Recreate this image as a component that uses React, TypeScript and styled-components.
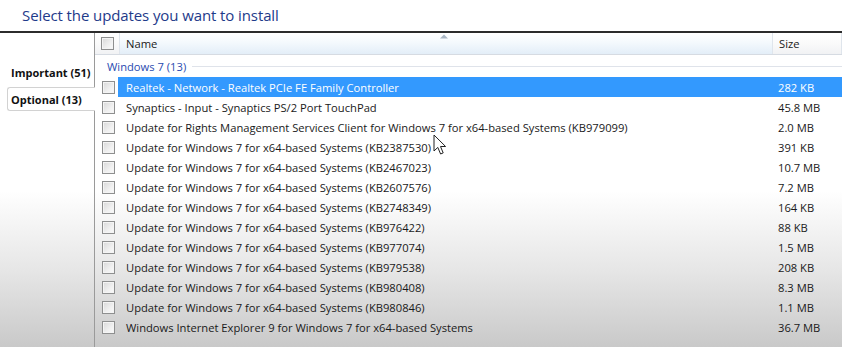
import React from "react";
import styled, { createGlobalStyle } from "styled-components";

const Global = createGlobalStyle`
  html, body { margin: 0; padding: 0; }
  body {
    width: 842px; height: 347px; overflow: hidden;
    font-family: "Open Sans", "Noto Sans", sans-serif;
    background: linear-gradient(180deg, #ffffff 0%, #ffffff 55%, #e6e6e6 78%, #c9c9c9 100%);
  }
`;

const Page = styled.div`
  width: 842px; height: 347px; position: relative;
  display: flex; flex-direction: column;
`;

const Title = styled.div`
  height: 31px; box-sizing: border-box;
  padding: 5px 0 0 22px;
  font-size: 15px; color: #1e3a8a; letter-spacing: -0.1px;
`;

const Body = styled.div`
  flex: 1; display: flex;
  border-top: 2px solid #2c2c2c;
`;

const Side = styled.div`
  width: 94px; flex: none; box-sizing: border-box;
  padding: 27px 0 0 7px;
  display: flex; flex-direction: column; gap: 3px;
`;

const Tab = styled.div<{ $active?: boolean }>`
  height: 24px; box-sizing: border-box;
  padding-left: 3px;
  display: flex; align-items: center;
  white-space: nowrap;
  font-weight: 700; font-size: 11px; color: #111;
  margin-right: ${p => (p.$active ? "-1px" : "0")};
  background: ${p => (p.$active ? "#fff" : "transparent")};
  border: 1px solid ${p => (p.$active ? "#d2d2d2" : "transparent")};
  border-right: none;
  border-radius: 3px 0 0 3px;
  position: relative; z-index: 1;
`;

const List = styled.div`
  flex: 1; display: flex; flex-direction: column;
  border-left: 1px solid #9a9a9a;
`;

const Header = styled.div`
  height: 21px; display: flex;
  border-bottom: 1px solid #d6dbe2;
`;

const HeadCell = styled.div<{ $w?: number; $blue?: boolean }>`
  ${p => (p.$w ? `width: ${p.$w}px; flex: none;` : "flex: 1;")}
  box-sizing: border-box; display: flex; align-items: center;
  padding-left: 6px; position: relative;
  font-size: 11.2px; color: #1a1a1a;
  background: ${p => (p.$blue
    ? "linear-gradient(180deg, #ffffff 0%, #f4f9fd 45%, #e3eef8 100%)"
    : "linear-gradient(180deg, #ffffff 0%, #fafafa 50%, #f1f2f4 100%)")};
  border-right: 1px solid #dfe5ec;
`;

const SortArrow = styled.svg`
  position: absolute; left: 320px; top: 1px;
`;

const GroupRow = styled.div`
  height: 22px; display: flex; align-items: center;
  padding-left: 12px; gap: 6px;
  font-size: 11.2px; color: #2a4bb0;
`;

const GroupLine = styled.div`
  flex: 1; height: 1px; background: #dfe3ea;
`;

const Row = styled.div<{ $sel?: boolean }>`
  height: 20px; display: flex; align-items: center;
  font-size: 11.2px;
  color: ${p => (p.$sel ? "#fff" : "#1a1a1a")};
`;

const CheckCell = styled.div`
  width: 20px; flex: none; display: flex; justify-content: flex-end;
`;

const Check = styled.div`
  width: 11px; height: 11px;
  border: 1px solid #8e8f8f;
  background: linear-gradient(135deg, #d8d8d8 0%, #f0f0f0 60%, #fbfbfb 100%);
  box-shadow: inset 0 0 0 1px #f4f4f4;
`;

const RowBody = styled.div<{ $sel?: boolean }>`
  flex: 1; height: 20px; display: flex; align-items: center;
  margin-left: 3px;
  background: ${p => (p.$sel ? "#3399fe" : "transparent")};
`;

const NameText = styled.div`
  width: 652px; flex: none; padding-left: 8px; box-sizing: border-box;
  white-space: nowrap; overflow: hidden;
`;

const SizeText = styled.div`
  flex: 1; padding-left: 8px;
`;

const Cursor = styled.svg`
  position: absolute; left: 433px; top: 134px;
`;

const rows: [string, string][] = [
  ["Realtek - Network - Realtek PCIe FE Family Controller", "282 KB"],
  ["Synaptics - Input - Synaptics PS/2 Port TouchPad", "45.8 MB"],
  ["Update for Rights Management Services Client for Windows 7 for x64-based Systems (KB979099)", "2.0 MB"],
  ["Update for Windows 7 for x64-based Systems (KB2387530)", "391 KB"],
  ["Update for Windows 7 for x64-based Systems (KB2467023)", "10.7 MB"],
  ["Update for Windows 7 for x64-based Systems (KB2607576)", "7.2 MB"],
  ["Update for Windows 7 for x64-based Systems (KB2748349)", "164 KB"],
  ["Update for Windows 7 for x64-based Systems (KB976422)", "88 KB"],
  ["Update for Windows 7 for x64-based Systems (KB977074)", "1.5 MB"],
  ["Update for Windows 7 for x64-based Systems (KB979538)", "208 KB"],
  ["Update for Windows 7 for x64-based Systems (KB980408)", "8.3 MB"],
  ["Update for Windows 7 for x64-based Systems (KB980846)", "1.1 MB"],
  ["Windows Internet Explorer 9 for Windows 7 for x64-based Systems", "36.7 MB"],
];

export default function App() {
  return (
    <Page>
      <Global />
      <Title>Select the updates you want to install</Title>
      <Body>
        <Side>
          <Tab>Important (51)</Tab>
          <Tab $active>Optional (13)</Tab>
        </Side>
        <List>
          <Header>
            <HeadCell $w={25}><Check /></HeadCell>
            <HeadCell $w={653} $blue>
              Name
              <SortArrow width="8" height="5" viewBox="0 0 8 5">
                <path d="M0 4.5 L4 0.5 L8 4.5 Z" fill="#a9b6c4" />
              </SortArrow>
            </HeadCell>
            <HeadCell>Size</HeadCell>
          </Header>
          <GroupRow>
            Windows 7 (13)
            <GroupLine />
          </GroupRow>
          {rows.map(([n, s], i) => (
            <Row key={i} $sel={i === 0}>
              <CheckCell><Check /></CheckCell>
              <RowBody $sel={i === 0}>
                <NameText>{n}</NameText>
                <SizeText>{s}</SizeText>
              </RowBody>
            </Row>
          ))}
        </List>
      </Body>
      <Cursor width="14" height="22" viewBox="0 0 14 22">
        <path d="M1 1 L1 17 L4.8 13.4 L7.6 20 L10.2 18.9 L7.5 12.5 L12.6 12.5 Z"
          fill="#fff" stroke="#222" strokeWidth="1" strokeLinejoin="round" />
      </Cursor>
    </Page>
  );
}
